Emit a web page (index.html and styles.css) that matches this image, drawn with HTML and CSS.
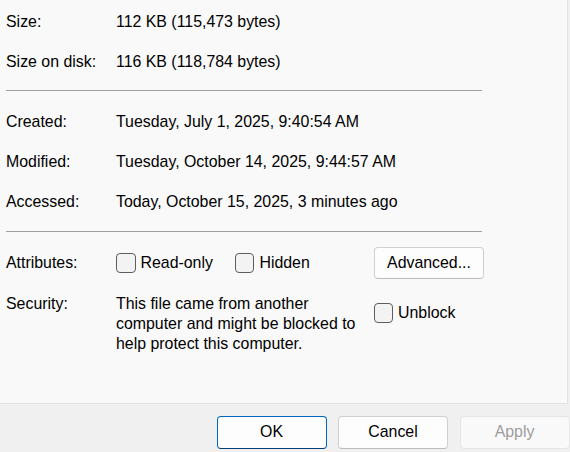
FILE: index.html
```html
<!DOCTYPE html>
<html>
<head>
<meta charset="utf-8">
<link rel="stylesheet" href="styles.css">
</head>
<body>
<div class="panel">
  <div class="row"><div class="label">Size:</div><div class="value">112 KB (115,473 bytes)</div></div>
  <div class="row gap20"><div class="label">Size on disk:</div><div class="value">116 KB (118,784 bytes)</div></div>
  <div class="sep sep1"></div>
  <div class="row"><div class="label">Created:</div><div class="value">Tuesday, July 1, 2025, 9:40:54 AM</div></div>
  <div class="row gap-date"><div class="label">Modified:</div><div class="value">Tuesday, October 14, 2025, 9:44:57 AM</div></div>
  <div class="row gap-date"><div class="label">Accessed:</div><div class="value">Today, October 15, 2025, 3 minutes ago</div></div>
  <div class="sep sep2"></div>
  <div class="attr-row">
    <div class="label">Attributes:</div>
    <label class="check"><span class="box"></span><span>Read-only</span></label>
    <label class="check hidden-check"><span class="box"></span><span>Hidden</span></label>
    <button class="btn advanced">Advanced...</button>
  </div>
  <div class="sec-row">
    <div class="label">Security:</div>
    <div class="sec-text">This file came from another computer and might be blocked to help protect this computer.</div>
    <label class="check unblock"><span class="box"></span><span>Unblock</span></label>
  </div>
</div>
<div class="footer">
  <button class="btn primary">OK</button>
  <button class="btn">Cancel</button>
  <button class="btn disabled">Apply</button>
</div>
</body>
</html>
```
FILE: styles.css
```css
html, body {
  margin: 0;
  padding: 0;
}
body {
  width: 570px;
  height: 452px;
  overflow: hidden;
  background: #f0f0f0;
  font-family: "Liberation Sans", Arial, sans-serif;
  font-size: 15.9px;
  color: #000;
}
.panel {
  box-sizing: border-box;
  width: 568px;
  height: 404px;
  background: #f9f9f9;
  border-right: 1px solid #e3e3e3;
  border-bottom: 1px solid #e3e3e3;
  padding: 12px 0 0 6px;
  display: flex;
  flex-direction: column;
}
.row {
  display: flex;
  height: 20px;
  line-height: 20px;
  white-space: nowrap;
}
.label {
  width: 110px;
  flex: none;
  line-height: 20px;
}
.gap20 { margin-top: 20px; }
.gap-date { margin-top: 20px; }
.sep {
  width: 476px;
  height: 1px;
  background: #a0a0a0;
}
.sep1 { margin-top: 18px; margin-bottom: 21px; }
.sep2 { margin-top: 19px; }
.attr-row {
  display: flex;
  align-items: center;
  height: 32px;
  margin-top: 15px;
}
.check {
  display: flex;
  align-items: center;
  gap: 5px;
  line-height: 20px;
}
.box {
  box-sizing: border-box;
  width: 19.5px;
  height: 19.5px;
  border: 1px solid #5e5e5e;
  border-radius: 4px;
  background: #f3f3f3;
  flex: none;
}
.hidden-check { margin-left: 22px; }
.btn {
  box-sizing: border-box;
  width: 110px;
  height: 32.5px;
  font-family: "Liberation Sans", Arial, sans-serif;
  font-size: 15.9px;
  color: #000;
  background: #fdfdfd;
  border: 1px solid #d0d0d0;
  border-bottom-color: #bcbcbc;
  border-radius: 4px;
  padding: 0;
}
.advanced {
  margin-left: auto;
  margin-right: 83px;
  height: 32px;
}
.sec-row {
  display: flex;
  align-items: flex-start;
  margin-top: 14.5px;
}
.sec-text {
  width: 252px;
  flex: none;
  line-height: 20px;
}
.unblock {
  margin-top: 9.5px;
  margin-left: 5.5px;
}
.footer {
  display: flex;
  justify-content: flex-end;
  gap: 11.5px;
  padding: 12px 0.5px 0 0;
}
.primary {
  border: 1px solid #0067c0;
  border-bottom-color: #003e73;
  background: #fdfdfd;
}
.disabled {
  color: #9d9d9d;
  background: #f9f9f9;
  border: 1px solid #e5e5e5;
}
```
